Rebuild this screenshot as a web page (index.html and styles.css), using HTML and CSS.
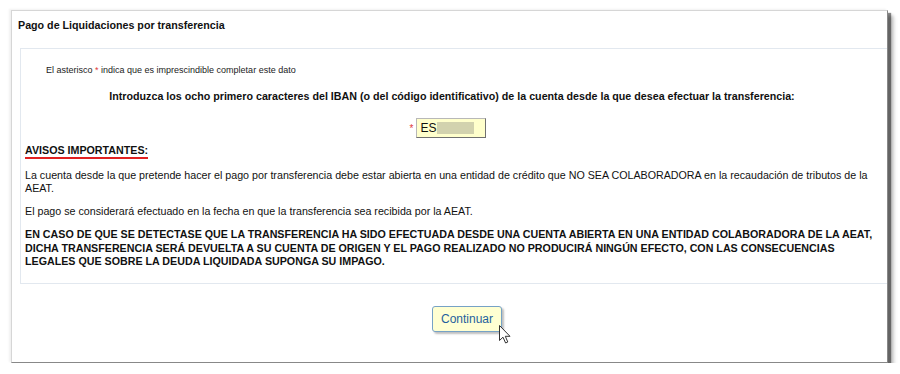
FILE: index.html
```html
<!DOCTYPE html>
<html lang="es">
<head>
    <meta charset="UTF-8">
    <meta name="viewport" content="width=device-width, initial-scale=1.0">
    <title>Pago de Liquidaciones por transferencia</title>
    <link rel="stylesheet" href="styles.css">
</head>
<body>
    <div class="window">
        <div class="window-title">Pago de Liquidaciones por transferencia</div>

        <div class="panel">
            <p class="note">El asterisco <span class="req">*</span> indica que es imprescindible completar este dato</p>

            <p class="instruction">Introduzca los ocho primero caracteres del IBAN (o del código identificativo) de la cuenta desde la que desea efectuar la transferencia:</p>

            <div class="iban-row">
                <span class="req">*</span>
                <div class="iban-field">ES<span class="redacted"></span></div>
            </div>

            <h2 class="notice-title">AVISOS IMPORTANTES:</h2>

            <p class="text">La cuenta desde la que pretende hacer el pago por transferencia debe estar abierta en una entidad de crédito que NO SEA COLABORADORA en la recaudación de tributos de la AEAT.</p>
            <p class="text">El pago se considerará efectuado en la fecha en que la transferencia sea recibida por la AEAT.</p>
            <p class="text warning">EN CASO DE QUE SE DETECTASE QUE LA TRANSFERENCIA HA SIDO EFECTUADA DESDE UNA CUENTA ABIERTA EN UNA ENTIDAD COLABORADORA DE LA AEAT, DICHA TRANSFERENCIA SERÁ DEVUELTA A SU CUENTA DE ORIGEN Y EL PAGO REALIZADO NO PRODUCIRÁ NINGÚN EFECTO, CON LAS CONSECUENCIAS LEGALES QUE SOBRE LA DEUDA LIQUIDADA SUPONGA SU IMPAGO.</p>
        </div>

        <div class="actions">
            <button class="continue-btn">Continuar</button>
            <svg class="cursor" width="13" height="19" viewBox="0 0 13 19">
                <path d="M0.5 0.5 L0.5 15.5 L4 12.2 L6.6 18 L8.8 17 L6.3 11.3 L11 11.3 Z" fill="#fff" stroke="#333" stroke-width="1"/>
            </svg>
        </div>
    </div>
</body>
</html>
```

FILE: styles.css
```css
* {
    margin: 0;
    padding: 0;
    box-sizing: border-box;
}

body {
    font-family: "Liberation Sans", Arial, sans-serif;
    background: #fff;
    color: #111;
    padding: 10px 0 0 11px;
}

.window {
    width: 877px;
    height: 353px;
    background: #fff;
    border: 1px solid #d6d6d6;
    border-right-color: #888;
    border-bottom-color: #888;
    box-shadow: 3px 3px 1px rgba(0,0,0,0.45), 5px 5px 3px rgba(0,0,0,0.22), 7px 7px 4px rgba(0,0,0,0.08), -2px -1px 2px rgba(0,0,0,0.06);
}

.window-title {
    height: 37px;
    padding: 7px 6px 0;
    font-size: 10.7px;
    font-weight: bold;
    line-height: 14px;
}

.panel {
    margin-left: 8px;
    border: 1px solid #e2e8ef;
    border-right: none;
    padding: 15px 8px 14px 4px;
}

.note {
    font-size: 9px;
    line-height: 12px;
    padding-left: 21px;
    color: #222;
}

.req {
    color: #e03a3a;
}

.instruction {
    margin-top: 13px;
    text-align: center;
    font-size: 10.7px;
    font-weight: bold;
    line-height: 14px;
}

.iban-row {
    margin-top: 15px;
    display: flex;
    justify-content: center;
    align-items: center;
    gap: 3px;
    padding-right: 8px;
}

.iban-row .req {
    font-size: 10px;
}

.iban-field {
    width: 70px;
    height: 20px;
    background: #ffffcc;
    border: 1px solid #b8b8b8;
    border-right-color: #707070;
    border-bottom-color: #707070;
    font-size: 12px;
    line-height: 18px;
    padding-left: 3px;
    display: flex;
    align-items: center;
}

.redacted {
    display: inline-block;
    width: 37px;
    height: 12px;
    margin-left: 1px;
    background: #d2d2ae;
}

.notice-title {
    display: inline-block;
    margin-top: 5px;
    font-size: 10.7px;
    font-weight: bold;
    line-height: 14px;
    border-bottom: 2px solid #e02020;
}

.text {
    margin-top: 10px;
    font-size: 10.7px;
    line-height: 13px;
}

.warning {
    font-weight: bold;
    line-height: 13.5px;
}

.actions {
    position: relative;
    display: flex;
    justify-content: center;
    padding-top: 22px;
    padding-left: 35px;
}

.continue-btn {
    width: 70px;
    height: 26px;
    background: #ffffd2;
    border: 1px solid #76a2c6;
    border-radius: 3px;
    color: #1f5f9e;
    font-family: "Liberation Sans", Arial, sans-serif;
    font-size: 12px;
    box-shadow: 2px 2px 2px rgba(0,0,0,0.25);
}

.cursor {
    position: absolute;
    left: 487px;
    top: 41px;
}
```
